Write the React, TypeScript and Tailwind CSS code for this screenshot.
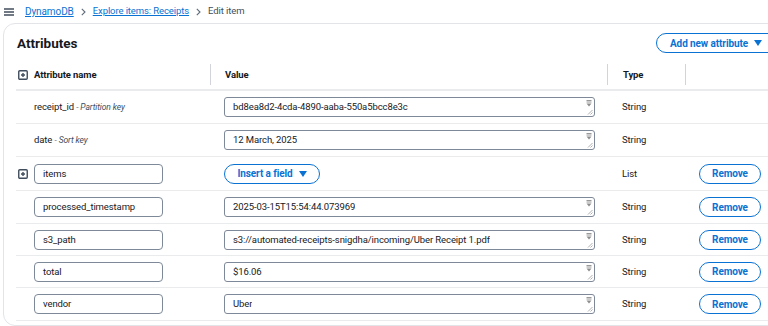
import React from "react";

const BLUE = "text-[#0972d3]";

const ROWS = [
  { name: "processed_timestamp", value: "2025-03-15T15:54:44.073969", h: "h-[33px]" },
  { name: "s3_path", value: "s3://automated-receipts-snigdha/incoming/Uber Receipt 1.pdf", h: "h-[32px]" },
  { name: "total", value: "$16.06", h: "h-[32px]" },
  { name: "vendor", value: "Uber", h: "h-[33px]" },
];

const ExpandIcon = () => (
  <svg width="10" height="10" viewBox="0 0 10 10" className="shrink-0">
    <rect x="0.75" y="0.75" width="8.5" height="8.5" rx="1" fill="none" stroke="#414d5c" strokeWidth="1.4" />
    <path d="M5 3v4M3 5h4" stroke="#414d5c" strokeWidth="1.4" />
  </svg>
);

const Caret = () => (
  <svg width="8" height="6" viewBox="0 0 8 6" className="ml-[6px]">
    <path d="M0 0h8L4 6z" fill="#0972d3" />
  </svg>
);

const Chevron = () => (
  <svg width="5" height="8" viewBox="0 0 5 8" className="mx-[7px]">
    <path d="M0.8 0.8L4 4L0.8 7.2" fill="none" stroke="#5f6b7a" strokeWidth="1.1" />
  </svg>
);

// fake textarea: value box with scroll arrow and resize grip
const ValueBox = ({ value }: { value: string }) => (
  <div className="relative flex h-[20px] w-[371px] items-center rounded-[3px] border border-[#7d8998] bg-white pl-[8px] text-[#16191f]">
    <span className="truncate">{value}</span>
    <svg width="6" height="8" viewBox="0 0 6 8" className="absolute right-[2px] top-[2px]">
      <path d="M0.5 0.5h5M0.5 2h5" stroke="#8d8d8d" strokeWidth="0.9" />
      <path d="M0.5 3.5h5L3 6.5z" fill="#8d8d8d" />
    </svg>
    <svg width="6" height="6" viewBox="0 0 6 6" className="absolute bottom-[1px] right-[1px]">
      <path d="M5.5 1L1 5.5M5.5 3.5L3.5 5.5" stroke="#9a9a9a" strokeWidth="0.8" />
    </svg>
  </div>
);

const NameInput = ({ value }: { value: string }) => (
  <div className="flex h-[20px] w-[129px] items-center rounded-[4px] border border-[#7d8998] bg-white pl-[8px] text-[#16191f]">
    {value}
  </div>
);

const PillButton = ({ children, w }: { children: React.ReactNode; w: string }) => (
  <button className={`flex h-[20px] items-center justify-center rounded-full border-[1.5px] border-[#0972d3] bg-white text-[10px] font-bold ${BLUE} ${w}`}>
    {children}
  </button>
);

const Row = ({ children, h = "h-[33px]" }: { children: React.ReactNode; h?: string }) => (
  <div className={`grid grid-cols-[194px_397px_78px_1fr] items-center border-b border-[#e9ebed] ${h}`}>
    {children}
  </div>
);

export default function App() {
  return (
    <div className="h-[326px] w-[768px] overflow-hidden bg-white font-['Roboto',sans-serif] text-[9.5px] tracking-[-0.1px] text-[#16191f]">
      {/* breadcrumb */}
      <div className="flex h-[23px] items-center pl-[4px] text-[10px]">
        <svg width="10" height="8" viewBox="0 0 10 8">
          <path d="M0 1h10M0 4h10M0 7h10" stroke="#414d5c" strokeWidth="1.3" />
        </svg>
        <a className={`ml-[11px] underline ${BLUE}`}>DynamoDB</a>
        <Chevron />
        <a className={`text-[9.5px] underline ${BLUE}`}>Explore items: Receipts</a>
        <Chevron />
        <span className="text-[9.5px] text-[#414d5c]">Edit item</span>
      </div>

      <div className="ml-[3px] mr-[-20px] h-[303px] rounded-[12px] border border-[#e2e4e8] pl-[12px]">
        <div className="flex items-center justify-between pt-[9px] pr-[6px]">
          <h1 className="pl-[1px] text-[13.5px] font-bold tracking-normal">Attributes</h1>
          <button className={`flex h-[20px] w-[125px] items-center justify-start rounded-full border-[1.5px] border-[#0972d3] pl-[13px] text-[10px] font-bold ${BLUE}`}>
            Add new attribute
            <Caret />
          </button>
        </div>

        <div className="mt-[11px] grid grid-cols-[194px_397px_78px_1fr] border-b-2 border-[#e9ebed] pb-[4px] font-bold">
          <div className="flex h-[21px] items-center gap-[6px] pl-[2px]">
            <ExpandIcon />
            <span>Attribute name</span>
          </div>
          <div className="flex h-[21px] items-center border-l border-[#d1d5db] pl-[14px]">Value</div>
          <div className="flex h-[21px] items-center border-l border-[#d1d5db] pl-[15px]">Type</div>
          <div className="flex h-[21px] items-center border-l border-[#d1d5db]" />
        </div>

        <Row>
          <div className="pl-[18px]">
            receipt_id <span className="text-[8.5px] italic text-[#414d5c]">- Partition key</span>
          </div>
          <div className="pl-[14px]"><ValueBox value="bd8ea8d2-4cda-4890-aaba-550a5bcc8e3c" /></div>
          <div className="pl-[15px]">String</div>
          <div />
        </Row>
        <Row>
          <div className="pl-[18px]">
            date <span className="text-[8.5px] italic text-[#414d5c]">- Sort key</span>
          </div>
          <div className="pl-[14px]"><ValueBox value="12 March, 2025" /></div>
          <div className="pl-[15px]">String</div>
          <div />
        </Row>
        <Row h="h-[34px]">
          <div className="flex items-center gap-[6px] pl-[2px]">
            <ExpandIcon />
            <NameInput value="items" />
          </div>
          <div className="pl-[14px]">
            <PillButton w="w-[96px]">
              Insert a field
              <Caret />
            </PillButton>
          </div>
          <div className="pl-[15px]">List</div>
          <div className="pl-[14px]"><PillButton w="w-[62px]">Remove</PillButton></div>
        </Row>
        {ROWS.map((r) => (
          <Row key={r.name} h={r.h}>
            <div className="pl-[18px]"><NameInput value={r.name} /></div>
            <div className="pl-[14px]"><ValueBox value={r.value} /></div>
            <div className="pl-[15px]">String</div>
            <div className="pl-[14px]"><PillButton w="w-[62px]">Remove</PillButton></div>
          </Row>
        ))}
      </div>
    </div>
  );
}
